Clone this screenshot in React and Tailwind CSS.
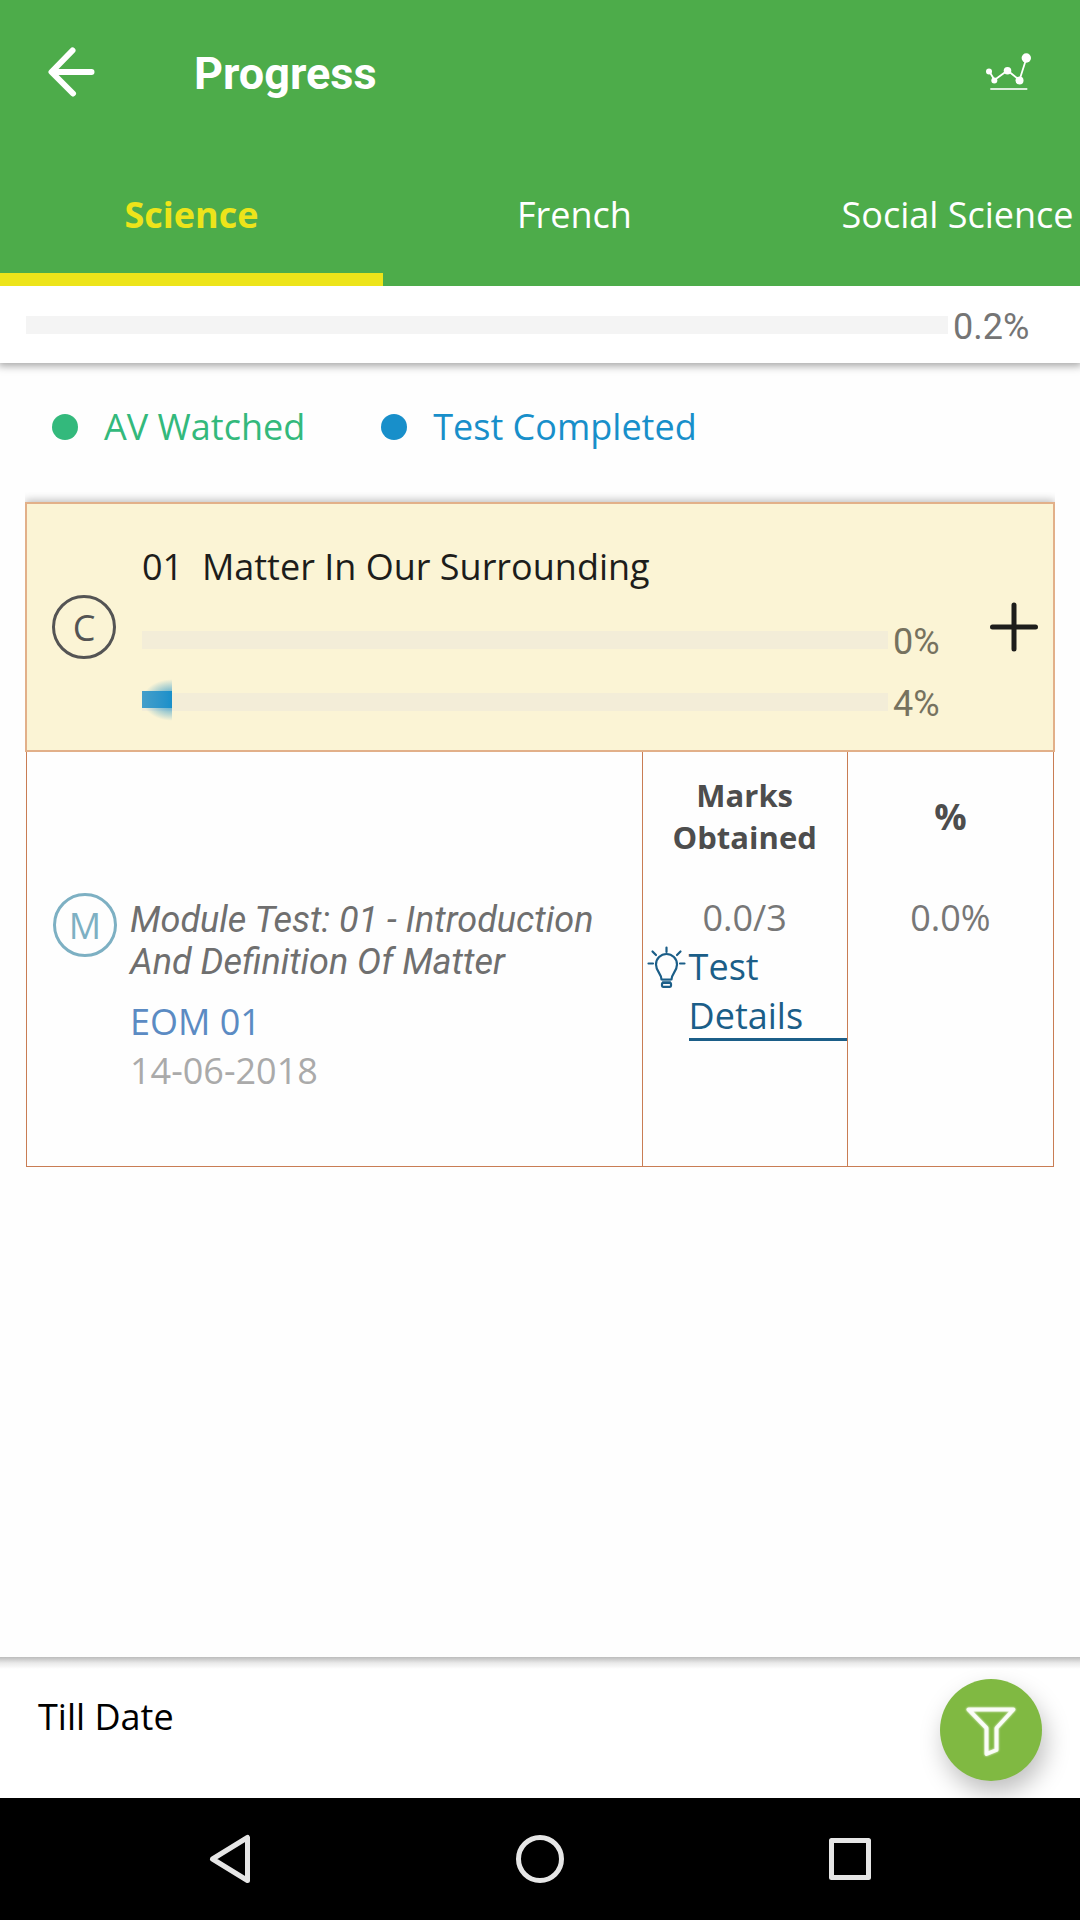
import { useState } from "react";

const subjects = ["Science", "French", "Social Science"];

const legends = [
    { name: "AV Watched", dot: "bg-[#33b97c]", text: "text-[#33b97c]" },
    { name: "Test Completed", dot: "bg-[#188fca]", text: "text-[#188fca]" },
];

const chapter = { code: "01", name: "Matter In Our Surrounding", watched: 0, completed: 4 };

const tests = [
    {
        title: "Module Test: 01 - Introduction And Definition Of Matter",
        type: "EOM 01",
        date: "14-06-2018",
        marks: "0.0/3",
        percent: "0.0%",
    },
];

const BackIcon = () => (
    <svg className="w-12 h-[50px]" viewBox="0 0 48 50" fill="none" stroke="#fff" strokeWidth="6" strokeLinecap="round" strokeLinejoin="round">
        <path d="M24.500 3.500L3.500 25L25 46.500M4 25H43.500" />
    </svg>
);

const ChartIcon = () => (
    <svg className="w-[46px] h-[38px]" viewBox="0 0 46 38" fill="#fff">
        <path d="M3 18L8.500 27L21.500 17.500L33.500 27L40.500 5" fill="none" stroke="#fff" strokeWidth="1.800" />
        <circle cx="3" cy="18.500" r="3" />
        <circle cx="8.300" cy="27.500" r="3" />
        <circle cx="21.500" cy="17.800" r="3.800" />
        <circle cx="33.500" cy="27.500" r="4" />
        <circle cx="40.300" cy="5" r="4.700" />
        <rect x="4.300" y="35" width="37" height="2" fillOpacity=".8" />
    </svg>
);

const PlusIcon = () => (
    <svg className="w-[50px] h-[50px]" viewBox="0 0 50 50" stroke="#1d1d1b" strokeWidth="5" strokeLinecap="round">
        <path d="M25 3V47M3.500 25H46.500" />
    </svg>
);

const BulbIcon = () => (
    <svg className="w-[39px] h-[42px] shrink-0" viewBox="0 0 39 42" fill="none" stroke="#1b5e88" strokeWidth="2.200" strokeLinecap="round" strokeLinejoin="round">
        <path d="M14.500 33.500C14.500 27.500 9 25.500 9 18.500A10.500 10.500 0 0 1 30 18.500C30 25.500 24.500 27.500 24.500 33.500Z" />
        <path d="M15.500 35.200H23.500" strokeWidth="1" />
        <rect x="15" y="36.800" width="9" height="4" rx="1" />
        <path d="M19.500 1.500V6M1.500 17.500H6M33 17.500H37.500M5.500 5.500L9 9M33.500 5.500L30 9" />
    </svg>
);

const FunnelIcon = () => (
    <svg className="w-[50px] h-[52px] drop-shadow-[0_0_1px_#ffffff]" viewBox="0 0 50 52" fill="none" stroke="#fff" strokeOpacity=".85" strokeWidth="4" strokeLinejoin="round">
        <path d="M2.500 5.500H47.500L30.500 24V46L20.500 50V24Z" />
    </svg>
);

const ProgressBar = ({ label, value, track, textWidth }) => (
    <div className="flex items-center gap-[5px]">
        <div role="progressbar" aria-label={label} aria-valuenow={value} className={`relative mb-1 h-[18px] flex-1 ${track}`}>
            {value >= 1 &&
                <div className="absolute left-0 -top-0.5 h-[17px]" style={{ width: `${value}%` }}>
                    <div className="absolute right-0 -top-3 h-[42px] w-full bg-[radial-gradient(ellipse_at_right,#188fcab0_20%,#188fca00_70%)]"></div>
                    <div className="relative h-full bg-linear-to-r from-[#449fca] to-[#188fca]"></div>
                </div>
            }
        </div>
        <span className={`font-[Roboto,sans-serif] leading-[42px] ${textWidth}`}>{value}%</span>
    </div>
);

const Badge = ({ letter, color }) => (
    <span className={`flex size-16 shrink-0 items-center justify-center rounded-full border-3 ${color}`}>{letter}</span>
);

const ChapterCard = ({ item }) => (
    <div className="-mx-px [clip-path:inset(-10px_0_0_0)]">
        <div className="flex items-center border-2 border-[#e2b089] bg-[#fbf4d5] pr-3.5 pl-[25px] shadow-[0_-2px_8px_rgba(0,0,0,0.25)]">
            <Badge letter="C" color="border-[#545454] text-[#545454]" />
            <div className="ml-[26px] flex-1 pt-[38px] pb-[25px]">
                <h2 className="mb-[30px] whitespace-pre text-[#1d1d1b]">{item.code}  {item.name}</h2>
                <div className="flex flex-col gap-5 text-[#76725f]">
                    <ProgressBar label="AV watched" value={item.watched} track="bg-[#f3edd8]" textWidth="w-[67px]" />
                    <ProgressBar label="Test completed" value={item.completed} track="bg-[#f3edd8]" textWidth="w-[67px]" />
                </div>
            </div>
            <button aria-label="Expand chapter" className="ml-[29px]"><PlusIcon /></button>
        </div>
    </div>
);

const TestTable = ({ list }) => (
    <table className="w-full table-fixed border-separate border-spacing-0 border-x border-b border-[#c97d54] text-[#777777]">
        <thead>
            <tr className="h-32 text-[#4d4d4d]">
                <td className="w-3/5 border-r border-[#c97d54]"></td>
                <th className="w-1/5 border-r border-[#c97d54] text-[31px] leading-[42px] font-bold">Marks Obtained</th>
                <th className="w-1/5 font-bold">%</th>
            </tr>
        </thead>
        <tbody>
            {list.map((item) => (
                <tr key={item.title} className="align-top">
                    <td className="border-r border-[#c97d54] pt-[13px] pb-[71px] pl-[26px]">
                        <div className="flex gap-[13px]">
                            <Badge letter="M" color="border-[#7db0c3] text-[#7db0c3]" />
                            <div className="pt-1.5">
                                <p className="font-[Roboto,sans-serif] leading-[42px] text-[#6f6f6f] italic">{item.title}</p>
                                <p className="mt-3.5 text-[#5b8bc3]">{item.type}</p>
                                <p className="text-[#aaaaaa]">{item.date}</p>
                            </div>
                        </div>
                    </td>
                    <td className="border-r border-[#c97d54] pt-[13px]">
                        <p className="text-center">{item.marks}</p>
                        <a href="#details" className="flex gap-[3px] pl-1 text-[#1b5e88]">
                            <span className="pt-1"><BulbIcon /></span>
                            <span className="h-[99px] flex-1 border-b-3 border-[#1b5e88]">Test Details</span>
                        </a>
                    </td>
                    <td className="pt-[13px] text-center">{item.percent}</td>
                </tr>
            ))}
        </tbody>
    </table>
);

const NavBar = () => (
    <nav className="flex h-[122px] items-center justify-center bg-black">
        <button aria-label="Back" className="flex w-[310px] justify-center">
            <svg className="size-[50px]" viewBox="0 0 50 50" fill="none" stroke="#e6e6e6" strokeWidth="5" strokeLinejoin="round">
                <path d="M42.500 3.500V46.500L7.500 25Z" />
            </svg>
        </button>
        <button aria-label="Home" className="flex w-[310px] justify-center">
            <svg className="size-[50px]" viewBox="0 0 50 50" fill="none" stroke="#e6e6e6" strokeWidth="5">
                <circle cx="25" cy="25" r="21.500" />
            </svg>
        </button>
        <button aria-label="Recent apps" className="flex w-[310px] justify-center">
            <svg className="size-[50px]" viewBox="0 0 50 50" fill="none" stroke="#e6e6e6" strokeWidth="5" strokeLinejoin="round">
                <rect x="6.500" y="6.500" width="37" height="37" />
            </svg>
        </button>
    </nav>
);

const App = () => {
    const [activeTab, setActiveTab] = useState("Science");

    return (
        <div className="flex min-h-screen flex-col overflow-x-hidden bg-[#fefefe] font-['Open_Sans',sans-serif] text-[36px] leading-[49px]">
            <header className="bg-[#4dac4a] text-white">
                <div className="mb-3 flex h-36 items-center pr-12 pl-12">
                    <button aria-label="Go back"><BackIcon /></button>
                    <h1 className="ml-[98px] flex-1 pt-0.5 font-[Roboto,sans-serif] text-[45px] font-bold">Progress</h1>
                    <button aria-label="Progress chart"><ChartIcon /></button>
                </div>
                <div role="tablist" className="flex overflow-hidden">
                    {subjects.map((item) => (
                        <button
                            key={item}
                            role="tab"
                            aria-selected={activeTab === item}
                            onClick={() => setActiveTab(item)}
                            className={`h-[130px] w-[383px] shrink-0 border-b-[13px] ${activeTab === item ? "border-[#ede41a] font-bold text-[#ede41a]" : "border-transparent"}`}
                        >
                            {item}
                        </button>
                    ))}
                </div>
            </header>

            <section className="z-10 bg-white px-[26px] pt-5 pb-[15px] text-[#757575] shadow-[0_1px_8px_2px_rgba(0,0,0,0.35)] [clip-path:inset(0_0_-14px_0)]">
                <ProgressBar label="Overall progress" value={0.2} track="bg-[#f4f4f4]" textWidth="w-[101px]" />
            </section>

            <main className="flex-1 px-[26px]">
                <ul className="flex gap-[76px] px-[26px] pt-[39px] pb-[51px]">
                    {legends.map((item) => (
                        <li key={item.name} className="flex items-center gap-[26px]">
                            <span className={`size-[26px] rounded-full ${item.dot}`}></span>
                            <span className={item.text}>{item.name}</span>
                        </li>
                    ))}
                </ul>
                <ChapterCard item={chapter} />
                <TestTable list={tests} />
            </main>

            <footer>
                <div className="h-3 bg-linear-to-b from-[#bcbcbc] via-[#e9e9e9] to-white"></div>
                <div className="flex items-start justify-between overflow-hidden bg-white pt-2.5 pr-[38px] pb-[17px] pl-[38px]">
                    <p className="pt-[13px] text-black">Till Date</p>
                    <button aria-label="Filter" className="flex size-[102px] items-center justify-center rounded-full bg-[#80b942] shadow-[4px_12px_24px_rgba(0,0,0,0.25)]">
                        <FunnelIcon />
                    </button>
                </div>
            </footer>
            <NavBar />
        </div>
    );
};

export default App;
